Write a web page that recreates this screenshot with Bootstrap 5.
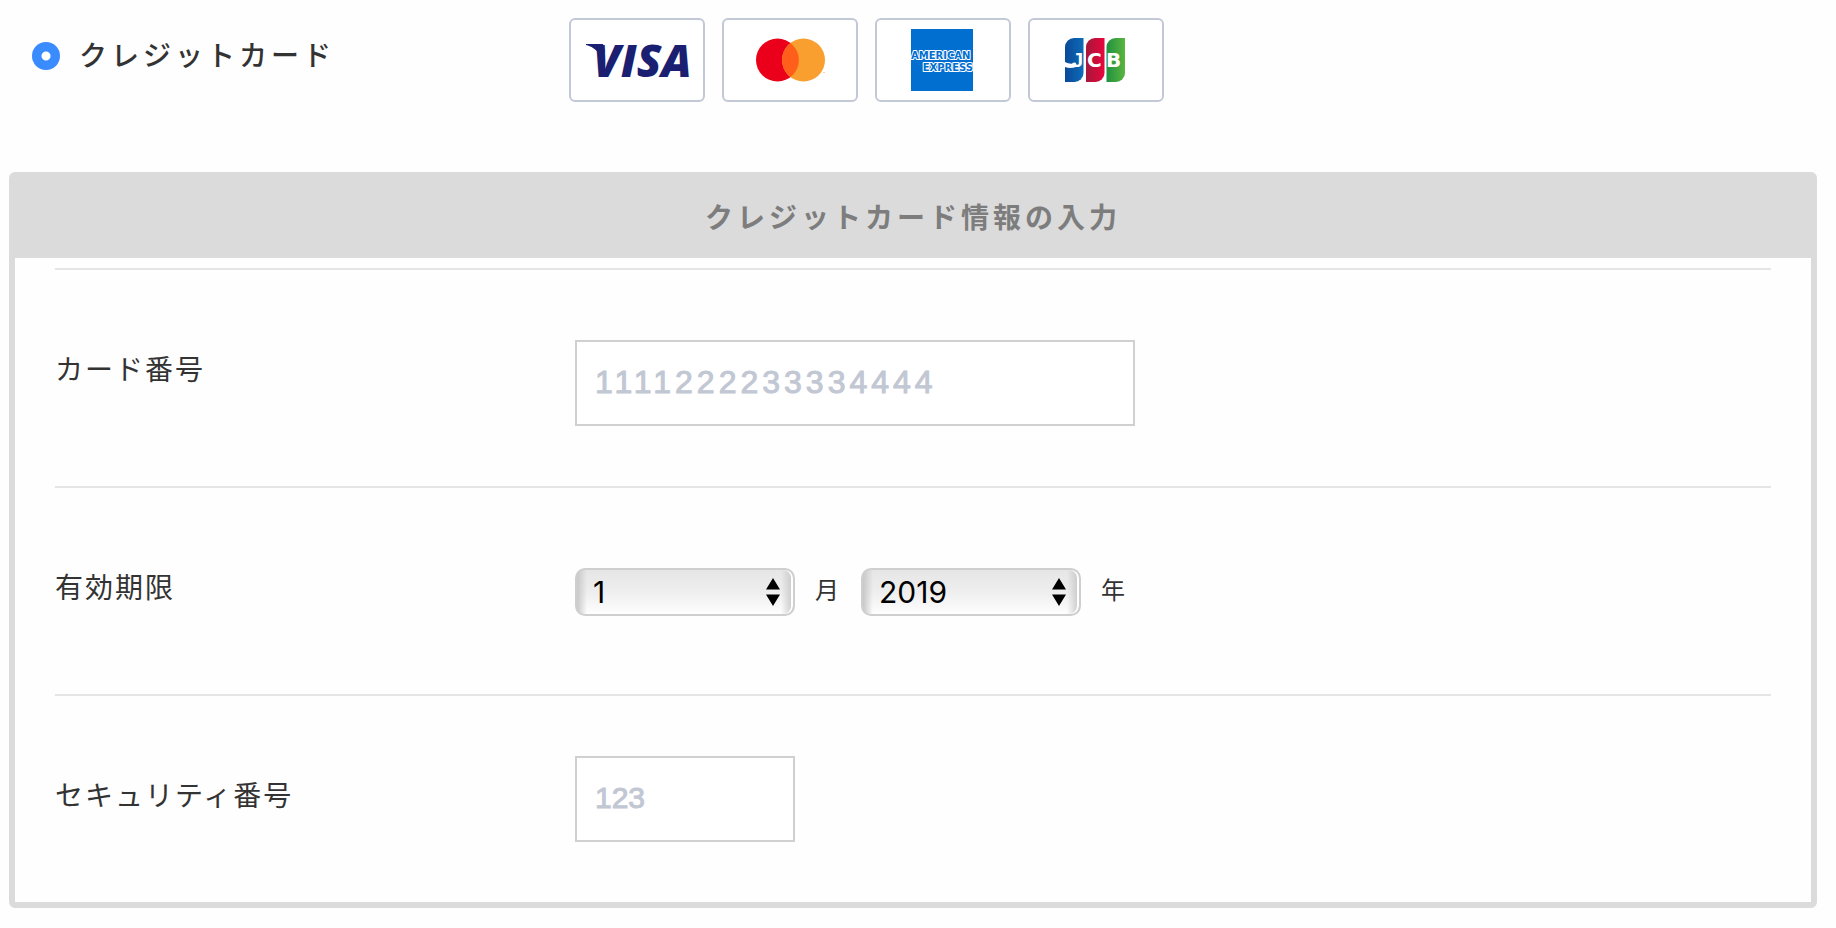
<!DOCTYPE html>
<html lang="ja">
<head>
<meta charset="utf-8">
<meta name="viewport" content="width=device-width, initial-scale=1">
<title>クレジットカード</title>
<link href="https://cdn.jsdelivr.net/npm/bootstrap@5.3.0/dist/css/bootstrap.min.css" rel="stylesheet">
<style>
body { font-family: "Liberation Sans", "Noto Sans CJK JP", sans-serif; font-size: 28px; line-height: 40px; color: #333; background: #fefefe; }
.method { padding: 18px 32px 70px; }
.method-name { flex: 0 0 537px; height: 76px; }
.method-name label { font-weight: 500; letter-spacing: 4px; padding-top: 2px; }
.pay-radio.form-check-input { width: 28px; height: 28px; border: 0; margin: 0 19px 0 0; background-color: #3a8bfd; background-image: none; }
.pay-radio.form-check-input:checked { background-color: #3a8bfd; background-image: radial-gradient(circle, #fff 4px, transparent 5px); }
.brands { gap: 17px; }
.brand { border: 2px solid #c3c8d6; border-radius: 6px; background: #fff; }
.panel { margin: 0 19px 20px 9px; border: 6px solid #dbdbdb; border-radius: 6px; }
.panel-title { margin: 0; padding: 21px 0 19px; background: #dbdbdb; color: #7d7d7d; font-size: 28px; line-height: 40px; font-weight: 700; letter-spacing: 4px; }
.panel-rows { padding: 10px 40px 0; }
.entry { border-top: 2px solid #e5e5e5; }
.entry-label { flex: 0 0 520px; padding-top: 81px; letter-spacing: 2px; }
.entry-value { padding: 60px 0; }
.number-value { padding-top: 70px; }
.date-value { padding: 80px 0 78px; }
.text-entry.form-control { height: 86px; padding: 0 18px 2px; border: 2px solid #d0d0d0; border-radius: 0; font-size: 30px; }
.text-entry::placeholder { color: #c1c7d3; -webkit-text-stroke: 1px #c1c7d3; }
.number-entry.form-control { width: 560px; font-size: 32px; letter-spacing: 4px; }
.code-entry.form-control { width: 220px; }
.date-select.form-select {
  width: 220px; height: 48px; padding: 0 40px 0 16px; border: 2px solid #cfcfcf; border-radius: 10px;
  font: 30px/44px Inter, sans-serif; color: #000;
  background-image: url("data:image/svg+xml,%3Csvg xmlns='http://www.w3.org/2000/svg' viewBox='0 0 14 28'%3E%3Cpath d='M7 0l7 11.500H0zM0 16.500h14L7 28z'/%3E%3C/svg%3E"), linear-gradient(to right, #c8c8c8, transparent 10px), linear-gradient(to left, #c8c8c8, transparent 12px), linear-gradient(#e6e6e6, #eee 50%, #fefefe);
  background-position: right 13px center, 0 0, 0 0, 0 0; background-size: 14px 28px, 100% 100%, 100% 100%, 100% 100%; background-repeat: no-repeat;
  box-shadow: inset -2px 0 0 #fff;
}
.unit { font-size: 24px; line-height: 40px; margin: 0 22px 2px 20px; }
</style>
</head>
<body>
<form>
  <div class="method d-flex align-items-start">
    <div class="method-name d-flex align-items-center">
      <input class="form-check-input pay-radio" type="radio" name="method" id="credit" checked>
      <label for="credit">クレジットカード</label>
    </div>
    <div class="brands d-flex">
      <div class="brand">
        <svg class="d-block" width="132" height="80" viewBox="0 0 132 80" role="img" aria-label="VISA">
          <path d="M15 24H32L34 32L29 35C25 29 20 26 15 25Z" fill="#1a1f71"/>
          <text x="22" y="57" font-family="Open Sans, Noto Sans, sans-serif" font-size="45" font-weight="800" font-style="italic" fill="#1a1f71">VISA</text>
        </svg>
      </div>
      <div class="brand">
        <svg class="d-block" width="132" height="80" viewBox="0 0 132 80" role="img" aria-label="Mastercard">
          <circle cx="53.500" cy="40" r="21.500" fill="#eb001b"/>
          <circle cx="79.500" cy="40" r="21.500" fill="#f99f2f"/>
          <path d="M66.500 22.900a21.500 21.500 0 0 1 0 34.200a21.500 21.500 0 0 1 0-34.200z" fill="#ff5f1b"/>
          <circle cx="100" cy="52.500" r=".6" fill="#f99f2f"/>
        </svg>
      </div>
      <div class="brand">
        <svg class="d-block" width="132" height="80" viewBox="0 0 132 80" role="img" aria-label="American Express">
          <rect x="34" y="9" width="62" height="62" fill="#016fd0"/>
          <g font-family="DejaVu Sans, sans-serif" font-weight="700" font-size="10" fill="#016fd0" stroke="#fff" stroke-width="2" stroke-linejoin="round" paint-order="stroke">
            <text x="34" y="39">AMERICAN</text>
            <text x="96" y="51" text-anchor="end">EXPRESS</text>
          </g>
        </svg>
      </div>
      <div class="brand">
        <svg class="d-block" width="132" height="80" viewBox="0 0 132 80" role="img" aria-label="JCB">
          <defs>
            <linearGradient id="blue"><stop stop-color="#094a98"/><stop offset="1" stop-color="#0d6bb8"/></linearGradient>
            <linearGradient id="red"><stop stop-color="#a5183a"/><stop offset="1" stop-color="#e8063d"/></linearGradient>
            <linearGradient id="green"><stop stop-color="#20913f"/><stop offset="1" stop-color="#5bb540"/></linearGradient>
          </defs>
          <path d="M44 18h9.500v35a9 9 0 0 1-9 9H35V27a9 9 0 0 1 9-9z" fill="url(#blue)"/>
          <path d="M65 18h9.500v35a9 9 0 0 1-9 9H56V27a9 9 0 0 1 9-9z" fill="url(#red)"/>
          <path d="M85.500 18H95v35a9 9 0 0 1-9 9h-9.500V27a9 9 0 0 1 9-9z" fill="url(#green)"/>
          <path d="M35 42q5 3 11 1v4q-6 2-11 0z" fill="#fff"/>
          <g font-family="DejaVu Sans, sans-serif" font-weight="700" font-size="20" fill="#fff">
            <text x="42" y="47" font-family="Liberation Sans, sans-serif">J</text>
            <text x="57" y="47">C</text>
            <text x="76" y="47">B</text>
          </g>
        </svg>
      </div>
    </div>
  </div>

  <section class="panel">
    <h2 class="panel-title text-center">クレジットカード情報の入力</h2>
    <div class="panel-rows">
      <div class="entry d-flex align-items-start">
        <label class="entry-label" for="number">カード番号</label>
        <div class="entry-value number-value">
          <input class="form-control text-entry number-entry" id="number" type="text" inputmode="numeric" placeholder="1111222233334444">
        </div>
      </div>
      <div class="entry d-flex align-items-start">
        <label class="entry-label" for="month">有効期限</label>
        <div class="entry-value date-value d-flex align-items-center">
          <select class="form-select date-select" id="month"><option>1</option></select>
          <label class="unit" for="month">月</label>
          <select class="form-select date-select" id="year"><option>2019</option></select>
          <label class="unit" for="year">年</label>
        </div>
      </div>
      <div class="entry d-flex align-items-start">
        <label class="entry-label" for="code">セキュリティ番号</label>
        <div class="entry-value">
          <input class="form-control text-entry code-entry" id="code" type="text" inputmode="numeric" placeholder="123">
        </div>
      </div>
    </div>
  </section>
</form>
<script src="https://cdn.jsdelivr.net/npm/bootstrap@5.3.0/dist/js/bootstrap.bundle.min.js"></script>
</body>
</html>
